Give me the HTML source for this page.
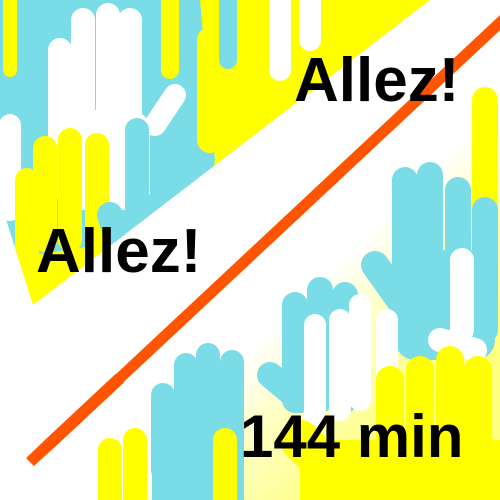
<!DOCTYPE html>
<html><head><style>
html,body{margin:0;padding:0;background:#fff;}
svg{display:block}
text{font-family:"Liberation Sans",sans-serif;font-weight:bold;fill:#000}
</style></head><body>
<svg width="500" height="500" viewBox="0 0 500 500" xmlns="http://www.w3.org/2000/svg">
<defs>
<clipPath id="tl"><polygon points="0,0 430,0 33,305 0,200"/></clipPath>
<linearGradient id="sp" gradientUnits="userSpaceOnUse" x1="300" y1="300" x2="420" y2="420">
<stop offset="0" stop-color="#ffff00" stop-opacity="0"/>
<stop offset="0.4" stop-color="#ffff00" stop-opacity="0.25"/>
<stop offset="1" stop-color="#ffff00" stop-opacity="0.5"/>
</linearGradient>
<linearGradient id="or" x1="0" y1="1" x2="0.25" y2="0.75">
<stop offset="0" stop-color="#ff5500" stop-opacity="0"/>
<stop offset="1" stop-color="#ff5500" stop-opacity="1"/>
</linearGradient>
</defs>
<g clip-path="url(#tl)" stroke-linecap="round" fill="none">
<rect width="500" height="400" fill="#ffff00"/>
<polygon points="0,0 200,0 215,160 200,230 0,260" fill="#7adce6"/>
<path d="M170 0 V70" stroke="#ffff00" stroke-width="18"/>
<path d="M10 0 V70" stroke="#ffff00" stroke-width="14"/>
<path d="M60 50 V160 M83 20 V150 M108 15 V140 M130 20 V130" stroke="#fff" stroke-width="24"/>
<path d="M175 95 L155 125" stroke="#fff" stroke-width="22"/>
<rect x="55" y="110" width="95" height="100" rx="20" fill="#fff"/>
<path d="M10 125 V210" stroke="#fff" stroke-width="22"/>
<path d="M137 130 V225" stroke="#7adce6" stroke-width="24"/>
<path d="M27 180 V270 M45 148 V240 M70 140 V240 M97 145 V240" stroke="#ffff00" stroke-width="24"/>
<path d="M110 215 L120 245" stroke="#7adce6" stroke-width="26"/>
<path d="M210 40 V140 M240 15 V120" stroke="#ffff00" stroke-width="26"/>
<path d="M228 0 V60" stroke="#7adce6" stroke-width="18"/>
<path d="M280 0 V70 M310 0 V40" stroke="#fff" stroke-width="22"/>
</g>
<polygon points="500,60 500,500 90,500" fill="url(#sp)"/>
<g stroke-linecap="round" fill="none">
<path d="M485 100 V260" stroke="#ffff00" stroke-width="26"/>
<path d="M405 180 V330 M430 175 V320 M458 190 V330 M485 210 V330" stroke="#7adce6" stroke-width="26"/>
<rect x="395" y="250" width="100" height="110" rx="20" fill="#7adce6"/>
<path d="M375 265 L400 300" stroke="#7adce6" stroke-width="28"/>
<path d="M295 305 V400 M320 290 V400 M345 295 V400" stroke="#7adce6" stroke-width="26"/>
<path d="M270 375 L300 400" stroke="#7adce6" stroke-width="26"/>
<path d="M315 325 V420 M340 320 V410 M360 305 V400 M387 320 V410" stroke="#fff" stroke-width="22"/>
<path d="M440 340 L475 350 M462 260 V330" stroke="#fff" stroke-width="24"/>
<path d="M163 395 V470 M186 365 V440 M208 355 V440 M232 362 V450" stroke="#7adce6" stroke-width="24"/>
<rect x="152" y="420" width="92" height="90" rx="10" fill="#7adce6"/>
<path d="M110 450 V500 M135 440 V500 M225 440 V500" stroke="#ffff00" stroke-width="24"/>
<path d="M420 370 V500 M450 360 V500 M478 370 V500 M390 380 V500" stroke="#ffff00" stroke-width="28"/>
<path d="M300 440 L340 480" stroke="#ffff00" stroke-width="40"/>
<rect x="300" y="440" width="200" height="70" fill="#ffff00"/>
</g>
<line x1="505" y1="18" x2="30" y2="462" stroke="#ff5500" stroke-width="11"/>
<line x1="120" y1="378" x2="28" y2="464" stroke="url(#or)" stroke-width="12"/>
<text x="294" y="101" font-size="62">Allez!</text>
<text x="36" y="272" font-size="62">Allez!</text>
<text x="240" y="457" font-size="60">144 min</text>
</svg>
</body></html>
